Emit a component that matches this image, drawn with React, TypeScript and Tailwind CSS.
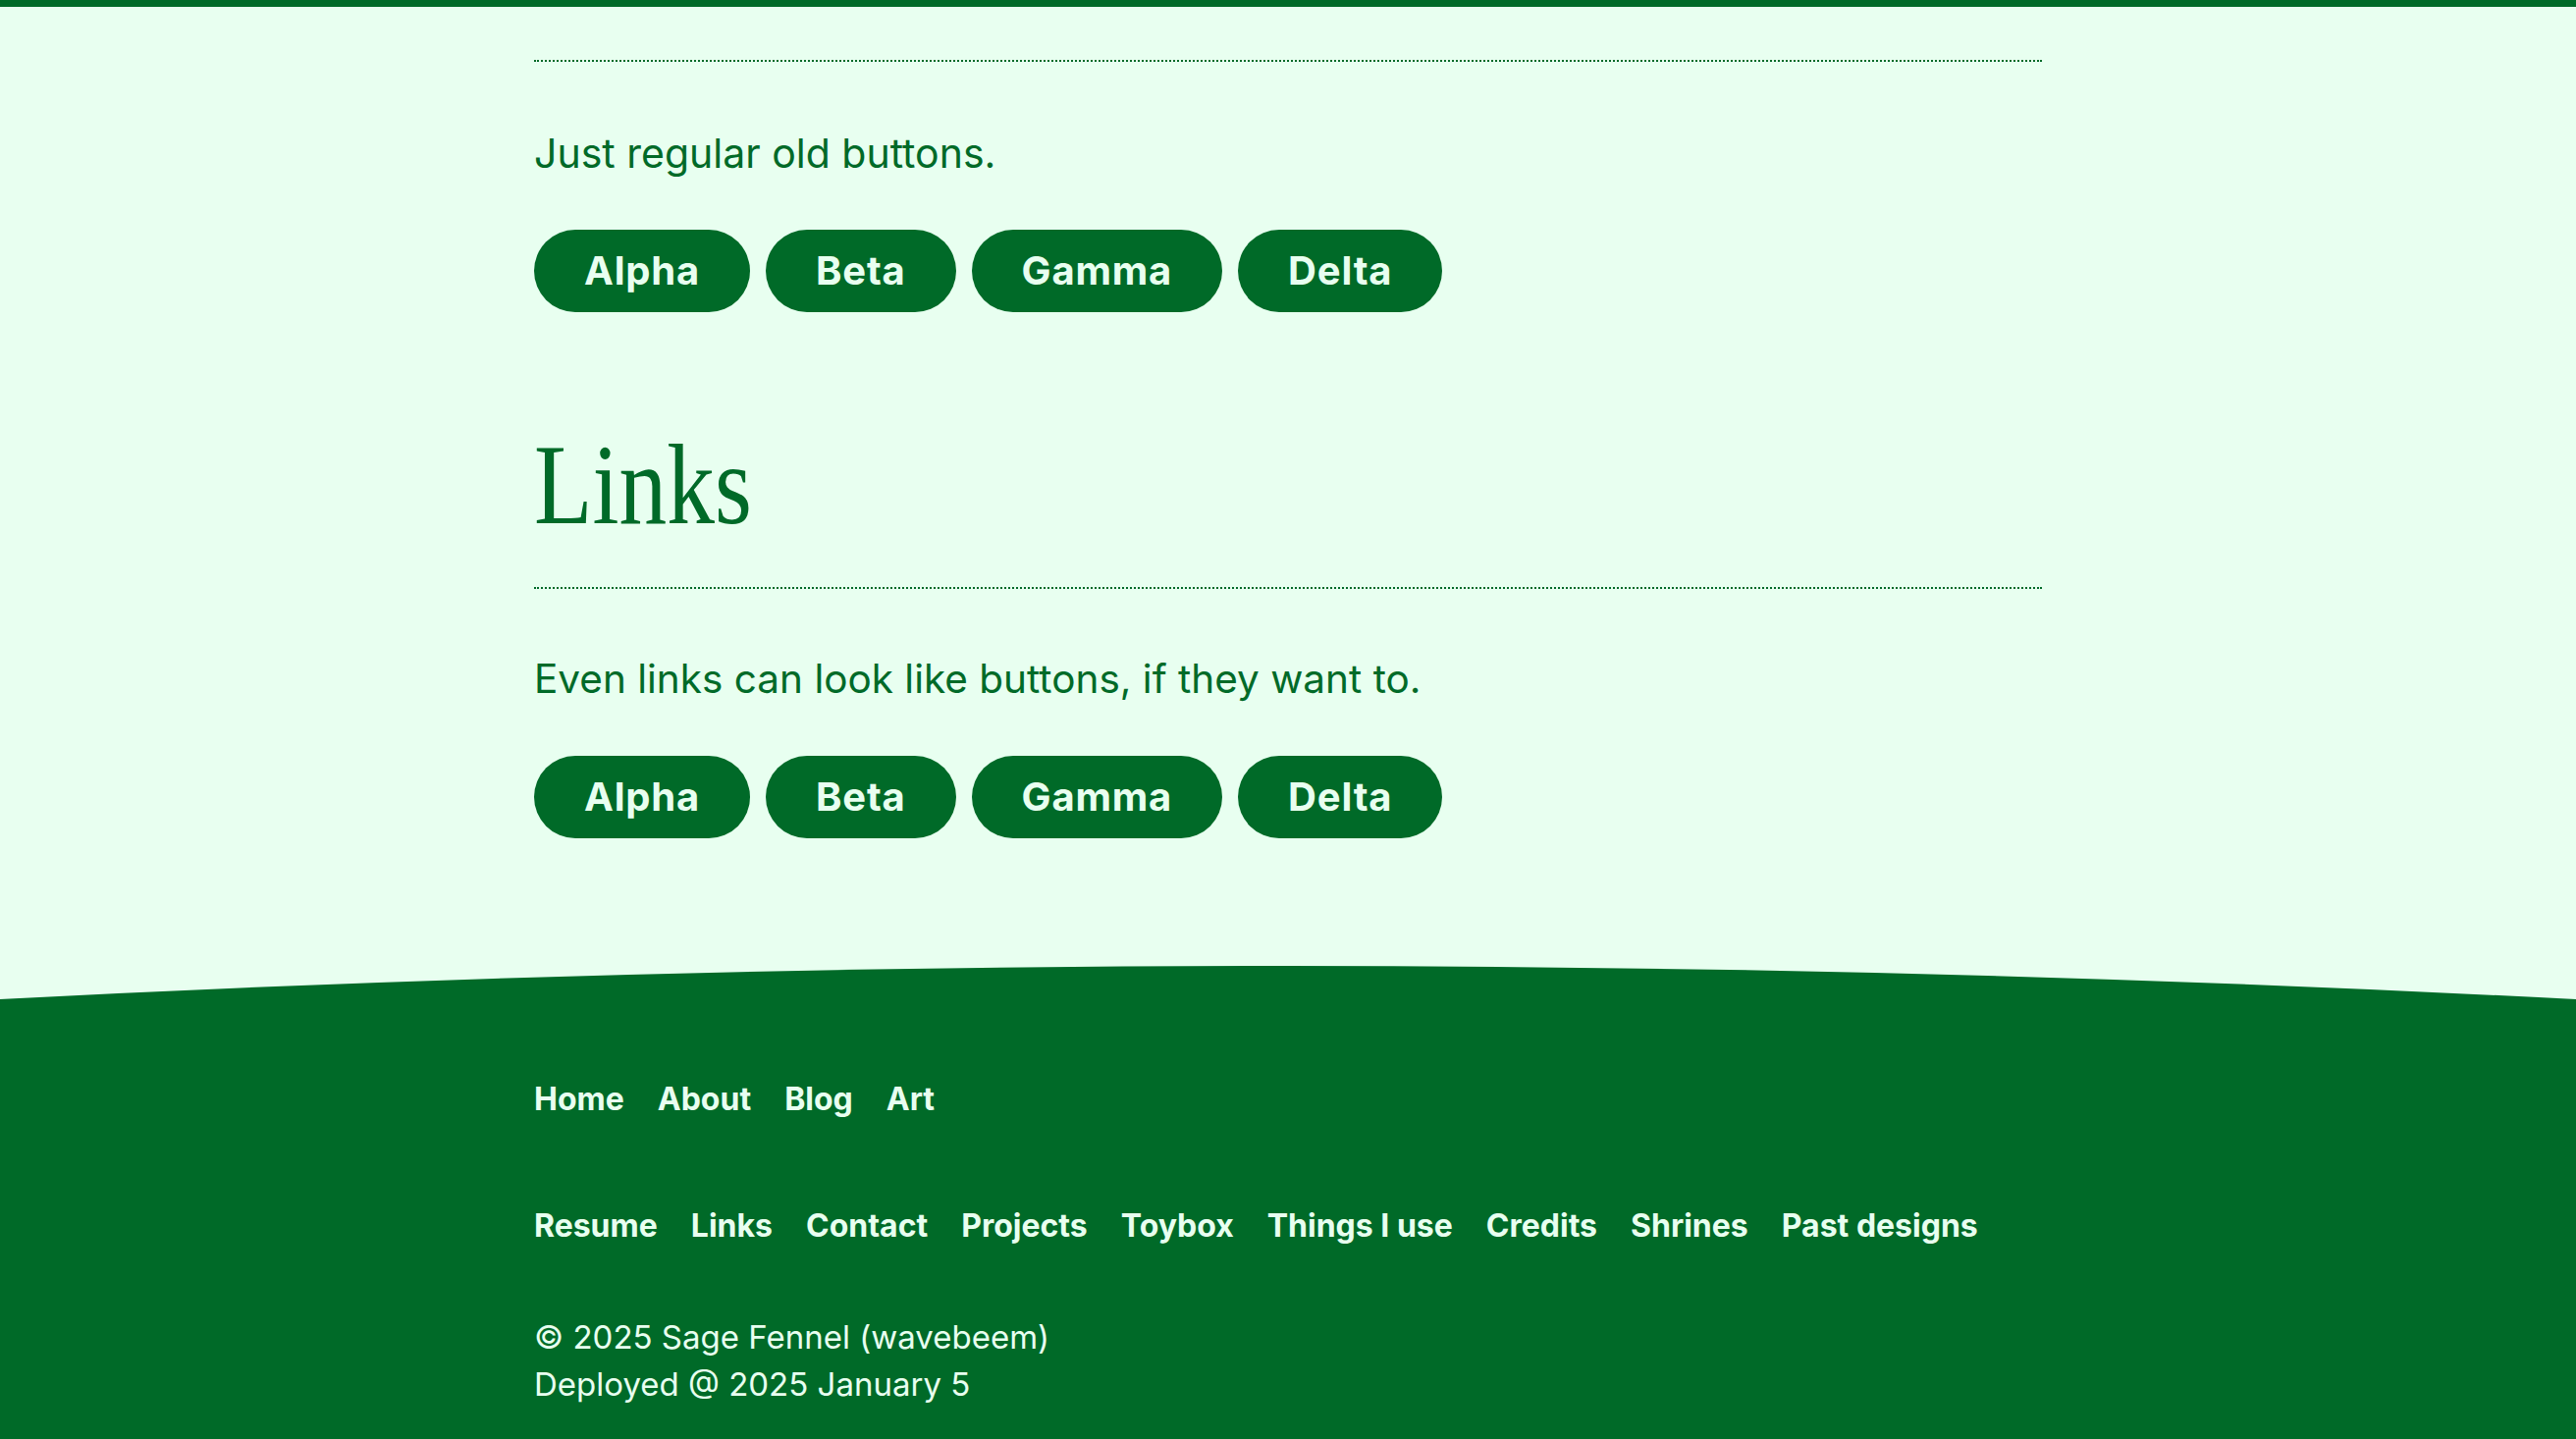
import React from "react";

const GREEN = "#006a28";

function PillRow({ as }: { as: "button" | "a" }) {
  const items = ["Alpha", "Beta", "Gamma", "Delta"];
  return (
    <div className="mt-[48px] flex gap-4">
      {items.map((t) =>
        as === "button" ? (
          <button
            key={t}
            className="h-[84px] px-[51px] rounded-full bg-[#006a28] text-[#e8fff0] text-[40px] tracking-[0.8px] font-bold leading-none flex items-center"
          >
            {t}
          </button>
        ) : (
          <a
            key={t}
            href="#"
            className="h-[84px] px-[51px] rounded-full bg-[#006a28] text-[#e8fff0] text-[40px] tracking-[0.8px] font-bold leading-none flex items-center no-underline"
          >
            {t}
          </a>
        )
      )}
    </div>
  );
}

export default function App() {
  const nav1 = ["Home", "About", "Blog", "Art"];
  const nav2 = [
    "Resume",
    "Links",
    "Contact",
    "Projects",
    "Toybox",
    "Things I use",
    "Credits",
    "Shrines",
    "Past designs",
  ];
  return (
    <div className="min-h-screen bg-[#e8fff0] text-[#006a28] font-['Inter','Noto_Sans',sans-serif] flex flex-col">
      <div className="h-[7px] bg-[#006a28]" />
      <main className="w-[1536px] mx-auto">
        <div className="mt-[54px] border-t-2 border-dotted border-[#006a28]" />
        <p className="mt-[63px] text-[41px] leading-[60px]">Just regular old buttons.</p>
        <PillRow as="button" />

        <h2 className="mt-[118px] font-['Liberation_Serif','Times_New_Roman',serif] text-[116px] leading-none font-normal origin-left scale-x-[0.84]">
          Links
        </h2>
        <div className="mt-[46px] border-t-2 border-dotted border-[#006a28]" />
        <p className="mt-[62px] text-[40.5px] leading-[60px]">
          Even links can look like buttons, if they want to.
        </p>
        <PillRow as="a" />
      </main>

      <footer className="mt-[130px] flex-1 flex flex-col">
        <svg
          className="block w-full h-[34px]"
          viewBox="0 0 2624 34"
          preserveAspectRatio="none"
        >
          <path d="M0 34 Q1312 -34 2624 34 Z" fill={GREEN} />
        </svg>
        <div className="flex-1 bg-[#006a28] text-[#e8fff0]">
          <div className="w-[1536px] mx-auto pt-[78px] pb-[30px]">
            <nav className="flex gap-[34px] text-[32px] leading-[48px] font-bold">
              {nav1.map((n) => (
                <a key={n} href="#">
                  {n}
                </a>
              ))}
            </nav>
            <nav className="mt-[81px] flex gap-[34px] text-[32px] leading-[48px] font-bold">
              {nav2.map((n) => (
                <a key={n} href="#">
                  {n}
                </a>
              ))}
            </nav>
            <div className="mt-[65px] text-[33px] leading-[48px]">
              <p>© 2025 Sage Fennel (wavebeem)</p>
              <p>Deployed @ 2025 January 5</p>
            </div>
          </div>
        </div>
      </footer>
    </div>
  );
}
